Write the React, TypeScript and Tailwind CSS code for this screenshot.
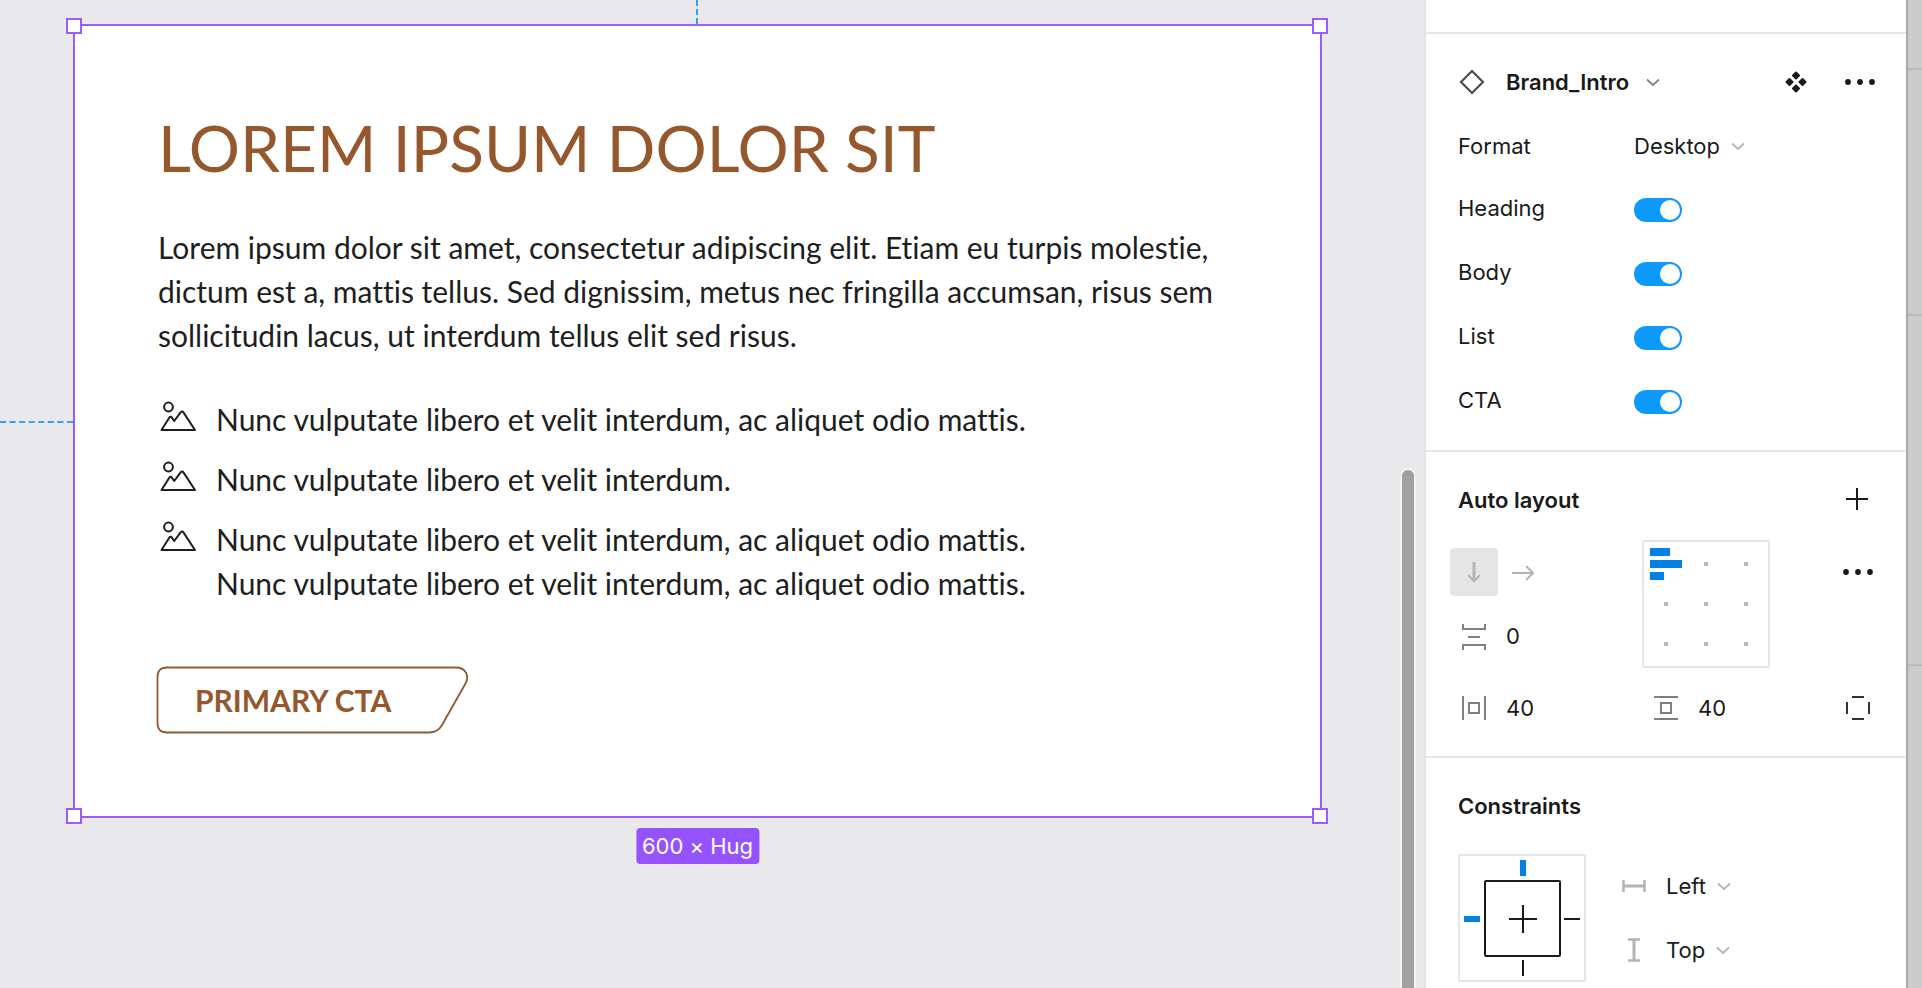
import type { ReactNode } from "react";

const LIST_ITEMS = [
  ["Nunc vulputate libero et velit interdum, ac aliquet odio mattis."],
  ["Nunc vulputate libero et velit interdum."],
  [
    "Nunc vulputate libero et velit interdum, ac aliquet odio mattis.",
    "Nunc vulputate libero et velit interdum, ac aliquet odio mattis.",
  ],
];

const TOGGLES = ["Heading", "Body", "List", "CTA"];

function PictureIcon() {
  return (
    <svg aria-hidden="true" className="h-11 w-10 shrink-0" viewBox="0 0 40 44" fill="none" stroke="#1e1e1e" strokeWidth="2" strokeLinejoin="round">
      <circle cx="10.5" cy="10" r="4.4" />
      <path d="M3.5 33 11.6 20.2Q12.6 19 13.6 20.4L16.2 24 22.4 15.6Q24 13.6 25.6 15.6L37 33Z" />
    </svg>
  );
}

function Chevron({ strong = false }: { strong?: boolean }) {
  return (
    <svg aria-hidden="true" className="pointer-events-none h-4 w-4 shrink-0" viewBox="0 0 16 16" fill="none" stroke={strong ? "#808080" : "#b3b3b3"} strokeWidth="1.700">
      <path d="M2 5.500 8 11l6-5.500" />
    </svg>
  );
}

function Dots() {
  return (
    <svg aria-hidden="true" className="h-8 w-8" viewBox="0 0 32 32" fill="#1a1a1a">
      <circle cx="4" cy="16" r="2.9" />
      <circle cx="16" cy="16" r="2.9" />
      <circle cx="28" cy="16" r="2.9" />
    </svg>
  );
}

function Dropdown({ label, value, options }: { label: string; value: string; options: string[] }) {
  return (
    <span className="flex items-center gap-2.5">
      <select aria-label={label} defaultValue={value} className="field-sizing-content appearance-none bg-transparent outline-none">
        {options.map((o) => (
          <option key={o}>{o}</option>
        ))}
      </select>
      <Chevron />
    </span>
  );
}

function NumberField({ label, value, children }: { label: string; value: string; children: ReactNode }) {
  return (
    <label className="flex h-16 items-center gap-5">
      <svg aria-hidden="true" className="h-7 w-6 shrink-0" viewBox="0 0 24 28" fill="none" stroke="#808080" strokeWidth="2">
        {children}
      </svg>
      <input aria-label={label} defaultValue={value} className="w-16 bg-transparent outline-none" />
    </label>
  );
}

function Handle({ className }: { className: string }) {
  return <span className={`absolute h-4 w-4 border-2 border-[#9a5cff] bg-white ${className}`} />;
}

function Artboard() {
  return (
    <div className="relative border-2 border-[#9a5cff] bg-white pt-[82px] pr-16 pb-[82px] pl-[83px] font-['Lato',sans-serif] text-[30px] leading-11 text-[#1e1e1e] [font-variant-ligatures:none]">
      <span className="absolute bottom-full left-1/2 mb-0.5 -ml-0.5 h-6 border-l-2 border-dashed border-[#2ea3f7]" />
      <span className="absolute top-1/2 right-full mr-0.5 w-[73px] border-t-2 border-dashed border-[#2ea3f7]" />
      <Handle className="-top-2 -left-[9px]" />
      <Handle className="-top-2 -right-2" />
      <Handle className="-bottom-2 -left-[9px]" />
      <Handle className="-right-2 -bottom-2" />

      <h1 className="text-[64px] leading-20 text-[#96572d] uppercase">Lorem ipsum dolor sit</h1>
      <p className="mt-[37px]">
        Lorem ipsum dolor sit amet, consectetur adipiscing elit. Etiam eu turpis molestie,
        <br />
        dictum est a, mattis tellus. Sed dignissim, metus nec fringilla accumsan, risus sem
        <br />
        sollicitudin lacus, ut interdum tellus elit sed risus.
      </p>
      <ul className="mt-10 flex flex-col gap-4">
        {LIST_ITEMS.map((lines, i) => (
          <li key={i} className="flex gap-[18px]">
            <PictureIcon />
            <span>
              {lines.map((line, j) => (
                <span key={j} className="block">
                  {line}
                </span>
              ))}
            </span>
          </li>
        ))}
      </ul>
      <button type="button" className="relative mt-[61px] -ml-0.5 block h-[68px] w-[313px] pl-[39px] text-left font-bold text-[#96572d]">
        <svg aria-hidden="true" className="absolute inset-0 h-full w-full" viewBox="0 0 313 68" fill="none" stroke="#96572d" strokeWidth="1.800">
          <path d="M11 1.500H300C309 1.500 314 9.500 309.500 17.500L286 59C283 64.500 279 66.500 273 66.500H11Q1.500 66.500 1.500 57V11Q1.500 1.500 11 1.500Z" />
        </svg>
        PRIMARY CTA
      </button>

      <span className="absolute top-full left-1/2 mt-3 flex h-9 -translate-x-1/2 items-center rounded bg-[#9453ff] px-1.5 font-['Inter',sans-serif] text-[22px] whitespace-nowrap text-white">
        600 × Hug
      </span>
    </div>
  );
}

function Sidebar() {
  return (
    <aside className="w-[484px] shrink-0 border-r-2 border-l-2 border-r-[#a8a8a8] border-l-[#e2e2e3] bg-white font-['Inter',sans-serif] text-[22px] leading-8 text-[#1a1a1a]">
      <div className="h-8" />

      <section className="border-t-2 border-[#e5e5e5] px-8 py-4">
        <header className="flex h-16 items-center">
          <svg aria-hidden="true" className="mr-5 h-7 w-7" viewBox="0 0 28 28" fill="none" stroke="#4d4d4d" strokeWidth="2.200">
            <path d="M14 3 25 14 14 25 3 14Z" />
          </svg>
          <button type="button" className="flex items-center gap-4 font-semibold">
            Brand_Intro
            <Chevron strong />
          </button>
          <button type="button" aria-label="Go to main component" className="mr-8 ml-auto">
            <svg aria-hidden="true" className="h-8 w-8" viewBox="0 0 32 32" fill="#1a1a1a" stroke="#1a1a1a" strokeWidth="2" strokeLinejoin="round">
              <path d="m16 6.500 3 3L16 12.500l-3-3ZM16 19.500l3 3-3 3-3-3ZM9.500 13l3 3-3 3L6.500 16ZM22.500 13l3 3-3 3-3-3Z" />
            </svg>
          </button>
          <button type="button" aria-label="Instance options" className="-mr-0.5">
            <Dots />
          </button>
        </header>
        <div className="flex h-16 items-center">
          <span className="w-44">Format</span>
          <Dropdown label="Format" value="Desktop" options={["Desktop", "Mobile"]} />
        </div>
        {TOGGLES.map((name) => (
          <label key={name} className="flex h-16 items-center">
            <span className="w-44 pb-1">{name}</span>
            <input
              type="checkbox"
              role="switch"
              defaultChecked
              className="flex h-6 w-12 appearance-none items-center justify-start rounded-full bg-[#b3b3b3] px-0.5 before:h-5 before:w-5 before:rounded-full before:bg-white checked:justify-end checked:bg-[#0d99ff]"
            />
          </label>
        ))}
      </section>

      <section className="border-t-2 border-[#e5e5e5] px-8 py-4">
        <header className="flex h-16 items-center justify-between">
          <h2 className="font-semibold">Auto layout</h2>
          <button type="button" aria-label="Add auto layout" className="-mr-0.5">
            <svg aria-hidden="true" className="h-8 w-8" viewBox="0 0 32 32" stroke="#1a1a1a" strokeWidth="2">
              <path d="M13 4v22M2 15h22" />
            </svg>
          </button>
        </header>
        <div className="mt-2 flex">
          <div className="w-[184px]">
            <div className="-ml-2 flex h-16 items-center">
              <button type="button" aria-label="Vertical direction" className="flex h-12 w-12 items-center justify-center rounded-sm bg-[#e5e5e5]">
                <svg aria-hidden="true" className="h-6 w-6" viewBox="0 0 24 24" fill="none" stroke="#b3b3b3">
                  <path d="M12 2v18" strokeWidth="3" />
                  <path d="m6 15 6 6 6-6" strokeWidth="2" />
                </svg>
              </button>
              <button type="button" aria-label="Horizontal direction" className="flex h-12 w-12 items-center justify-center">
                <svg aria-hidden="true" className="h-6 w-6" viewBox="0 0 24 24" fill="none" stroke="#b3b3b3" strokeWidth="2">
                  <path d="M2 13h20M16 6l7 7-7 7" />
                </svg>
              </button>
            </div>
            <div className="pl-1">
              <NumberField label="Gap between items" value="0">
                <path d="M1 2v5h22V2M6 15h12M1 28v-5h22v5" />
              </NumberField>
            </div>
          </div>
          <button type="button" aria-label="Alignment" className="rounded-sm">
            <svg aria-hidden="true" className="h-32 w-32" viewBox="0 0 128 128">
              <rect x="1" y="1" width="126" height="126" rx="1" fill="white" stroke="#e5e5e5" strokeWidth="2" />
              <path d="M62 22h4v4h-4zM102 22h4v4h-4zM22 62h4v4h-4zM62 62h4v4h-4zM102 62h4v4h-4zM22 102h4v4h-4zM62 102h4v4h-4zM102 102h4v4h-4z" fill="#b9b9b9" />
              <path d="M8 8h20v8H8zM8 20h32v8H8zM8 32h14v8H8z" fill="#0180e5" />
            </svg>
          </button>
          <button type="button" aria-label="Advanced layout" className="ml-auto h-16">
            <Dots />
          </button>
        </div>
        <div className="mt-2 flex items-center pl-1">
          <div className="w-48">
            <NumberField label="Horizontal padding" value="40">
              <path d="M1 2v24M23 2v24M7 9h10v10H7Z" />
            </NumberField>
          </div>
          <NumberField label="Vertical padding" value="40">
            <path d="M0 3h24M0 25h24M7 9h10v10H7Z" />
          </NumberField>
          <button type="button" aria-label="Individual padding" className="mr-1 ml-auto">
            <svg aria-hidden="true" className="h-6 w-6" viewBox="0 0 24 24" stroke="#333333" strokeWidth="2">
              <path d="M6 1h12M6 23h12M1 6v12M23 6v12" />
            </svg>
          </button>
        </div>
      </section>

      <section className="border-t-2 border-[#e5e5e5] px-8 pt-4">
        <h2 className="flex h-16 items-center font-semibold">Constraints</h2>
        <div className="mt-4 flex">
          <svg aria-label="Pinned left and top" role="img" className="h-32 w-32" viewBox="0 0 128 128" fill="none" strokeWidth="2">
            <rect x="1" y="1" width="126" height="126" rx="1" stroke="#e5e5e5" />
            <rect x="27" y="27" width="75" height="75" rx="1" stroke="#1a1a1a" />
            <path d="M65 51v28M51 65h28M106 65h16M65 106v16" stroke="#1a1a1a" />
            <path d="M65 6v16M6 65h16" stroke="#0180e5" strokeWidth="6" />
          </svg>
          <div className="ml-9">
            <div className="flex h-16 items-center gap-5">
              <svg aria-hidden="true" className="h-6 w-6" viewBox="0 0 24 24" stroke="#b3b3b3">
                <path d="M2 12h20" strokeWidth="3" />
                <path d="M1.500 6v12M22.500 6v12" strokeWidth="2.500" />
              </svg>
              <Dropdown label="Horizontal constraint" value="Left" options={["Left", "Right", "Center"]} />
            </div>
            <div className="flex h-16 items-center gap-5">
              <svg aria-hidden="true" className="h-6 w-6" viewBox="0 0 24 24" stroke="#b3b3b3">
                <path d="M12 2v20" strokeWidth="3" />
                <path d="M6 1.500h12M6 22.500h12" strokeWidth="2.500" />
              </svg>
              <Dropdown label="Vertical constraint" value="Top" options={["Top", "Bottom", "Center"]} />
            </div>
          </div>
        </div>
      </section>
    </aside>
  );
}

export default function App() {
  return (
    <div className="flex min-h-screen bg-[#e9e9eb]">
      <main className="relative min-w-0 flex-1 pt-6 pr-[102px] pl-[73px]">
        <Artboard />
        <span className="absolute right-2.5 bottom-0 h-[518px] w-3 rounded-t-full bg-[#a0a0a1] ring-2 ring-[#f1f1f2]" />
      </main>
      <Sidebar />
      <div className="flex w-3.5 shrink-0 flex-col bg-[#cccccc]">
        <div className="h-[70px] border-b-2 border-[#bababa]" />
        <div className="h-[246px] border-b-2 border-[#bababa]" />
        <div className="h-[350px] border-b-2 border-[#bababa]" />
      </div>
    </div>
  );
}
